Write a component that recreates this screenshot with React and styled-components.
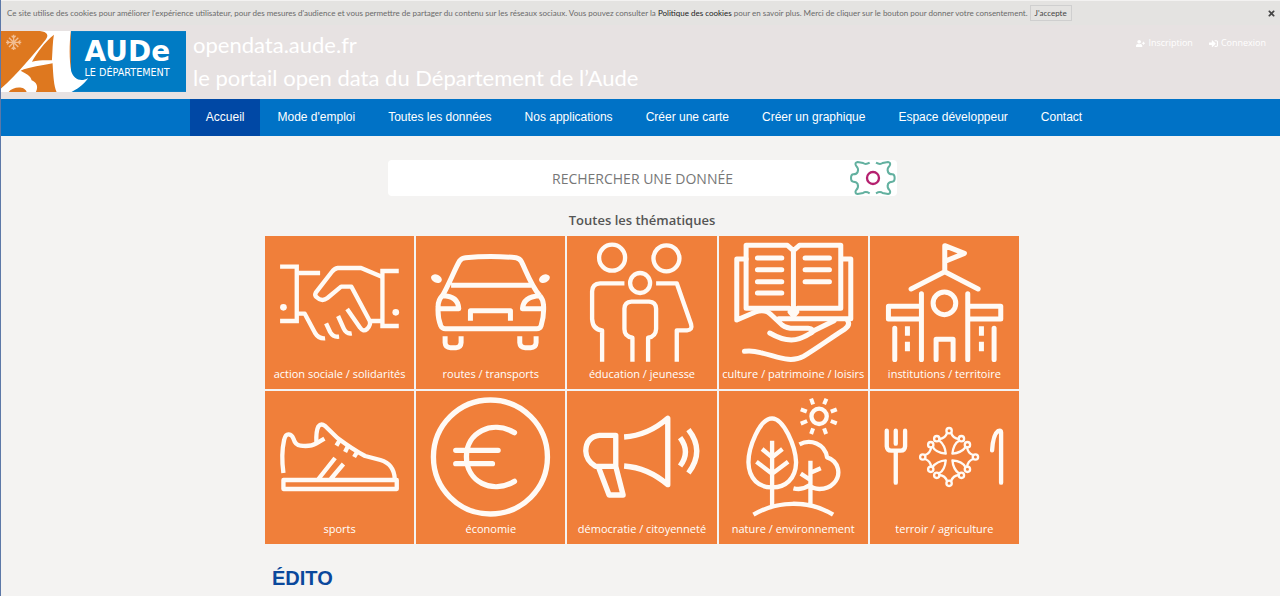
import React, { useState } from 'react'
import styled, { createGlobalStyle } from 'styled-components'
import { FaUserPlus, FaSignInAlt, FaTimes } from 'react-icons/fa'

const GlobalStyle = createGlobalStyle`
  * {
    box-sizing: border-box;
  }
  body {
    margin: 0;
    background-color: #f4f3f2;
    font-family: "Open Sans", "Noto Sans", sans-serif;
  }
`;

const Page = styled.div`
  min-height: 100vh;
  border-left: 1px solid #5c78a8;
`;

const CookieBar = styled.div`
  display: flex;
  align-items: center;
  height: 25px;
  padding: 0 4px 0 6px;
  border-top: 1px solid #f3f2f1;
  background-color: #e4e3e1;
  color: #6a6a6a;
  font-family: Lato, sans-serif;
  font-size: 8px;
  white-space: nowrap;
`;

const CookieLink = styled.a`
  color: #222;
  text-decoration: none;
`;

const AcceptButton = styled.button`
  height: 16px;
  margin-left: 2px;
  padding: 0 4px;
  border: 1px solid #cfcfcf;
  background: transparent;
  color: #444;
  font-family: inherit;
  font-size: 8px;
  cursor: pointer;
`;

const CloseButton = styled.button`
  display: flex;
  margin-left: auto;
  padding: 0;
  border: none;
  background: transparent;
  color: #444;
  font-size: 9px;
  cursor: pointer;
`;

const Header = styled.header`
  display: flex;
  align-items: flex-start;
  height: 74px;
  background-color: #e7e2e2;
`;

const LogoLink = styled.a`
  display: block;
  margin-top: 6px;
  svg {
    display: block;
  }
`;

const SiteTitle = styled.h1`
  margin: 3px 0 0 7px;
  color: white;
  font-family: Lato, sans-serif;
  font-size: 22px;
  font-weight: 400;
  line-height: 33px;
`;

const Account = styled.div`
  display: flex;
  gap: 16px;
  margin: 12px 14px 0 auto;
`;

const AccountLink = styled.a`
  display: flex;
  align-items: center;
  gap: 3px;
  color: white;
  font-size: 9px;
  line-height: 12px;
  text-decoration: none;
`;

const Nav = styled.nav`
  display: flex;
  justify-content: center;
  gap: 1px;
  padding-left: 7px;
  background-color: #0072c6;
`;

const NavLink = styled.a`
  padding: 0 16px;
  background-color: ${props => props.$active ? '#0048a5' : 'transparent'};
  color: white;
  font-family: "Liberation Sans", Arial, sans-serif;
  font-size: 12px;
  line-height: 37px;
  text-decoration: none;
`;

const Main = styled.main`
  max-width: 757px;
  margin: 0 auto;
  padding: 24px 0 0 3px;
`;

const SearchForm = styled.form`
  display: flex;
  align-items: center;
  width: 509px;
  height: 36px;
  margin: 0 auto;
  padding-left: 48px;
  border-radius: 4px;
  background-color: white;
`;

const SearchInput = styled.input`
  flex: 1;
  min-width: 0;
  padding: 0;
  border: none;
  outline: none;
  background: transparent;
  color: #555;
  font-family: "Open Sans", sans-serif;
  font-size: 14px;
  text-align: center;
  &::placeholder{
    color: #777;
    opacity: 1;
  }
`;

const SearchButton = styled.button`
  display: flex;
  padding: 0 1px 0 0;
  border: none;
  background: transparent;
  cursor: pointer;
`;

const ThemesTitle = styled.h2`
  margin: 12px 0 4px;
  color: #555;
  font-size: 13px;
  font-weight: 600;
  line-height: 24px;
  text-align: center;
`;

const Grid = styled.div`
  display: grid;
  grid-template-columns: repeat(5, 1fr);
  gap: 2px;
`;

const Tile = styled.a`
  display: flex;
  flex-direction: column;
  height: 153px;
  background-color: #f07f3a;
  color: white;
  font-family: "Open Sans", sans-serif;
  font-size: 11px;
  line-height: 24px;
  text-align: center;
  text-decoration: none;
  white-space: nowrap;
`;

const TileIcon = styled.svg`
  display: block;
  width: 100%;
  height: 126px;
  fill: none;
  stroke: #fffaf5;
  stroke-width: 15;
  .dot {
    fill: #fffaf5;
    stroke: none;
  }
`;

const SectionTitle = styled.h2`
  margin: 20px 0 0 7px;
  color: #0a489c;
  font-family: "Liberation Sans", Arial, sans-serif;
  font-size: 20px;
  line-height: 28px;
`;

const links = [
  'Accueil',
  "Mode d'emploi",
  'Toutes les données',
  'Nos applications',
  'Créer une carte',
  'Créer un graphique',
  'Espace développeur',
  'Contact',
];

const themes = [
  {
    label: 'action sociale / solidarités',
    box: '16 13 447 378',
    icon: (
      <g strokeWidth="13">
        <path d="M61 105H111V268H61M111 124H181M417 118H368V283H417" />
        <path d="M368 136L304 109H234Q224 110 216 121L168 183Q164 191 170 196Q186 212 203 199L244 165H275L330 268Q334 280 322 292Q310 302 301 288L262 232M330 268H368M111 246H135L166 304Q177 322 196 320" strokeLinejoin="round" />
        <path d="M199 275L211 301Q220 317 238 315M235 253L252 291Q260 308 276 305" />
        <circle className="dot" cx="71" cy="227" r="10" />
        <circle className="dot" cx="408" cy="242" r="10" />
      </g>
    ),
  },
  {
    label: 'routes / transports',
    box: '468 13 447 378',
    icon: (
      <g strokeLinejoin="round">
        <path d="M547 192C566 160 585 110 599 87Q605 79 616 78Q692 71 768 78Q779 80 784 90C798 118 814 164 839 192M573 161H813" />
        <path d="M547 192Q534 204 534 225Q532 258 542 282Q546 291 556 291H830Q840 291 843 282Q853 250 850 218Q849 204 839 192M547 192Q594 192 596 231H536M839 192Q790 194 787 231H850" />
        <path d="M631 267V237H751V267M555 314V333Q556 348 571 348H588Q602 348 603 333V314M779 314V333Q780 348 795 348H812Q827 348 828 333V314" />
        <ellipse className="dot" cx="529" cy="141" rx="17" ry="12" transform="rotate(25 529 141)" />
        <ellipse className="dot" cx="853" cy="141" rx="17" ry="12" transform="rotate(-25 853 141)" />
      </g>
    ),
  },
  {
    label: 'éducation / jeunesse',
    box: '6 13 447 378',
    icon: (
      <g strokeWidth="13" strokeLinejoin="round">
        <circle cx="141" cy="78" r="39" />
        <circle cx="304" cy="80" r="39" />
        <circle cx="225" cy="154" r="30" />
        <path d="M178 155H105Q82 156 81 179V262Q83 294 111 296V390M273 155H335L378 278Q383 295 366 296H335V390" />
        <path d="M202 390V318Q178 315 178 292V231Q179 211 199 210H252Q272 211 273 231V292Q272 315 249 318V390" />
      </g>
    ),
  },
  {
    label: 'culture / patrimoine / loisirs',
    box: '461 13 447 378',
    icon: (
      <g strokeLinejoin="round" strokeLinecap="round">
        <path d="M684 240L672 230H542V41H666L684 57L702 41H826V230H696L684 240V57M674 241L684 253L694 241" />
        <path d="M542 82H514V265L570 241Q600 230 618 250L650 280Q664 291 690 290H728Q747 291 738 303M640 261H856V82H828" />
        <path d="M576 79H649M576 114H649M576 150H649M576 184H649M719 79H792M719 114H792M719 150H792" />
        <path d="M613 304Q664 334 702 321Q722 315 748 296L806 267M537 359Q560 356 585 363C635 374 674 396 714 374C756 349 797 318 837 293Q855 281 847 268" />
      </g>
    ),
  },
  {
    label: 'institutions / territoire',
    box: '15 13 447 378',
    icon: (
      <g strokeLinejoin="round" strokeLinecap="round">
        <path d="M138 172L239 120L339 172M239 120V42L298 65L239 89" />
        <circle cx="238" cy="215" r="34" />
        <path d="M169 186V384M308 186V384M169 224H70V262H169M308 224H407V262H308M89 290V384M387 290V384" />
        <path d="M213 384V323H264V384" />
        <path d="M127 284V312M127 330V359M349 284V312M349 330V359" strokeLinecap="butt" />
      </g>
    ),
  },
  {
    label: 'sports',
    box: '16 10 447 378',
    icon: (
      <g strokeWidth="13" strokeLinejoin="round">
        <path d="M71 256C66 220 67 184 73 157Q77 139 87 140Q97 141 101 153Q107 173 122 174Q152 178 170 167L194 153" />
        <path d="M170 167Q168 130 176 116Q184 106 196 115L233 151Q280 186 316 205L362 217Q403 229 405 274" />
        <path d="M71 277H411V304H71ZM176 274L226 211M213 274L251 229M242 154L230 174M267 170L256 193M295 188L283 208" />
      </g>
    ),
  },
  {
    label: 'économie',
    box: '468 10 447 378',
    icon: (
      <g strokeWidth="16" strokeLinecap="round">
        <circle cx="691" cy="208" r="171" />
        <path d="M763 135C695 96 619 133 619 207C619 282 695 321 763 281M587 188H714M587 228H697" />
      </g>
    ),
  },
  {
    label: 'démocratie / citoyenneté',
    box: '6 10 447 378',
    icon: (
      <g strokeWidth="16" strokeLinejoin="round">
        <path d="M152 143H103Q63 148 62 190Q63 219 91 236H152ZM100 238L132 322H174L152 236M177 148Q248 144 308 92V291Q248 240 177 235" />
        <path d="M345 150Q377 193 345 235M370 126Q420 190 370 256" />
      </g>
    ),
  },
  {
    label: 'nature / environnement',
    box: '461 10 447 378',
    icon: (
      <g strokeLinejoin="round" strokeWidth="13">
        <path d="M620 92C581 93 549 181 549 224C550 275 582 300 620 299C658 300 691 275 692 224C690 175 655 93 620 92ZM620 159V353M590 184L620 209L651 184M573 222L620 258L668 222" />
        <path d="M702 170C735 153 778 168 785 209C822 221 828 263 805 287Q789 304 762 304Q743 304 732 293Q710 309 684 302M735 219V353M706 258L735 277M735 255L766 242M564 381C633 340 728 335 803 381" />
        <circle cx="761" cy="86" r="23" />
        <path d="M743 50L737 33M776 50L783 33M724 72L706 65M796 72L814 65M725 100L706 108M796 100L814 107M743 122L737 139M776 122L782 139" strokeWidth="12" />
      </g>
    ),
  },
  {
    label: 'terroir / agriculture',
    box: '15 10 447 378',
    icon: (
      <g strokeLinejoin="round" strokeLinecap="round" strokeWidth="13">
        <path d="M92 129V168M65 129V176Q66 189 78 189H107Q119 189 120 176V129M92 189V285M408 285V134Q408 127 399 130Q384 140 381 188" />
        {[0, 90, 180, 270].map(angle => (
          <g key={angle} transform={`rotate(${angle} 252 208)`} strokeWidth="7">
            <circle cx="252" cy="129" r="8" />
            <circle cx="215" cy="153" r="8" />
            <circle cx="289" cy="153" r="8" />
            <path d="M246 136Q240 152 223 154M258 136Q264 152 281 154M222 158Q240 172 242 198Q212 195 203 178" />
          </g>
        ))}
      </g>
    ),
  },
];

function Logo() {
  return (
    <svg width="185" height="61" viewBox="3 93 556 183" role="img" aria-label="Aude, le département">
      <rect x="3" y="93" width="556" height="183" fill="#007bc4" />
      <path fill="#de781f" d="M3 93H213V276H3Z" />
      <path fill="#fff" d="M120 93C142 96 148 105 137 119C106 158 52 222 3 266V276H215C240 263 255 250 265 234C244 247 222 239 214 214C208 180 208 130 213 93Z" />
      <path fill="#de781f" d="M162 104C133 128 112 157 96 185C116 180 140 180 156 181C158 152 158 127 162 104ZM62 212C87 201 130 196 158 190C160 226 162 260 170 276H108C117 258 108 246 95 241C93 226 76 221 62 212ZM26 276C38 260 74 257 80 276Z" />
      <g stroke="#f2bd91" strokeWidth="4" fill="none">
        <path d="M41 104V150M18 127H64M27 113L55 141M55 113L27 141M35 107L41 113L47 107M35 147L41 141L47 147M21 121L27 127L21 133M61 121L55 127L61 133" />
      </g>
      <g fill="#fff" fontFamily="DejaVu Sans">
        <text x="254" y="184" fontSize="84" fontWeight="700">AUDe</text>
        <text x="254" y="227" fontSize="29">LE DÉPARTEMENT</text>
      </g>
    </svg>
  )
}

function Gear() {
  const half = 'M1451 38Q1439 45 1431 39L1415 36Q1405 38 1410 47Q1419 56 1415 66Q1412 73 1402 73Q1395 73 1395 84Q1395 95 1402 95Q1412 95 1415 102Q1419 112 1410 121Q1405 130 1415 132L1431 129Q1439 123 1451 130';
  return (
    <svg width="46" height="36" viewBox="1392 30 138 108" fill="none" stroke="#62b09f" strokeWidth="6">
      <path d={half} />
      <path d={half} transform="translate(2921 0) scale(-1 1)" />
      <circle cx="1461" cy="84" r="18" stroke="#b5206f" strokeWidth="7" />
    </svg>
  )
}

export default function App() {
  const [showCookies, setShowCookies] = useState(true);
  const [search, setSearch] = useState('');

  return (
    <Page>
      <GlobalStyle />
      {showCookies && (
        <CookieBar>
          <span>
            Ce site utilise des cookies pour améliorer l'expérience utilisateur, pour des mesures d'audience et vous permettre de partager du contenu sur les réseaux sociaux. Vous pouvez consulter la <CookieLink href="#cookies">Politique des cookies</CookieLink> pour en savoir plus. Merci de cliquer sur le bouton pour donner votre consentement.
          </span>
          <AcceptButton onClick={() => setShowCookies(false)}>J'accepte</AcceptButton>
          <CloseButton aria-label="Fermer" onClick={() => setShowCookies(false)}><FaTimes /></CloseButton>
        </CookieBar>
      )}
      <Header>
        <LogoLink href="#accueil"><Logo /></LogoLink>
        <SiteTitle>opendata.aude.fr<br />le portail open data du Département de l’Aude</SiteTitle>
        <Account>
          <AccountLink href="#inscription"><FaUserPlus />Inscription</AccountLink>
          <AccountLink href="#connexion"><FaSignInAlt />Connexion</AccountLink>
        </Account>
      </Header>
      <Nav>
        {links.map((link, i) => (
          <NavLink key={link} href="#" $active={i === 0}>{link}</NavLink>
        ))}
      </Nav>
      <Main>
        <SearchForm onSubmit={e => e.preventDefault()}>
          <SearchInput
            type="text"
            aria-label="Rechercher une donnée"
            placeholder="RECHERCHER UNE DONNÉE"
            value={search}
            onChange={e => setSearch(e.target.value)}
          />
          <SearchButton type="submit" aria-label="Rechercher"><Gear /></SearchButton>
        </SearchForm>
        <ThemesTitle>Toutes les thématiques</ThemesTitle>
        <Grid>
          {themes.map(theme => (
            <Tile key={theme.label} href="#">
              <TileIcon viewBox={theme.box}>{theme.icon}</TileIcon>
              {theme.label}
            </Tile>
          ))}
        </Grid>
        <SectionTitle>ÉDITO</SectionTitle>
      </Main>
    </Page>
  )
}
